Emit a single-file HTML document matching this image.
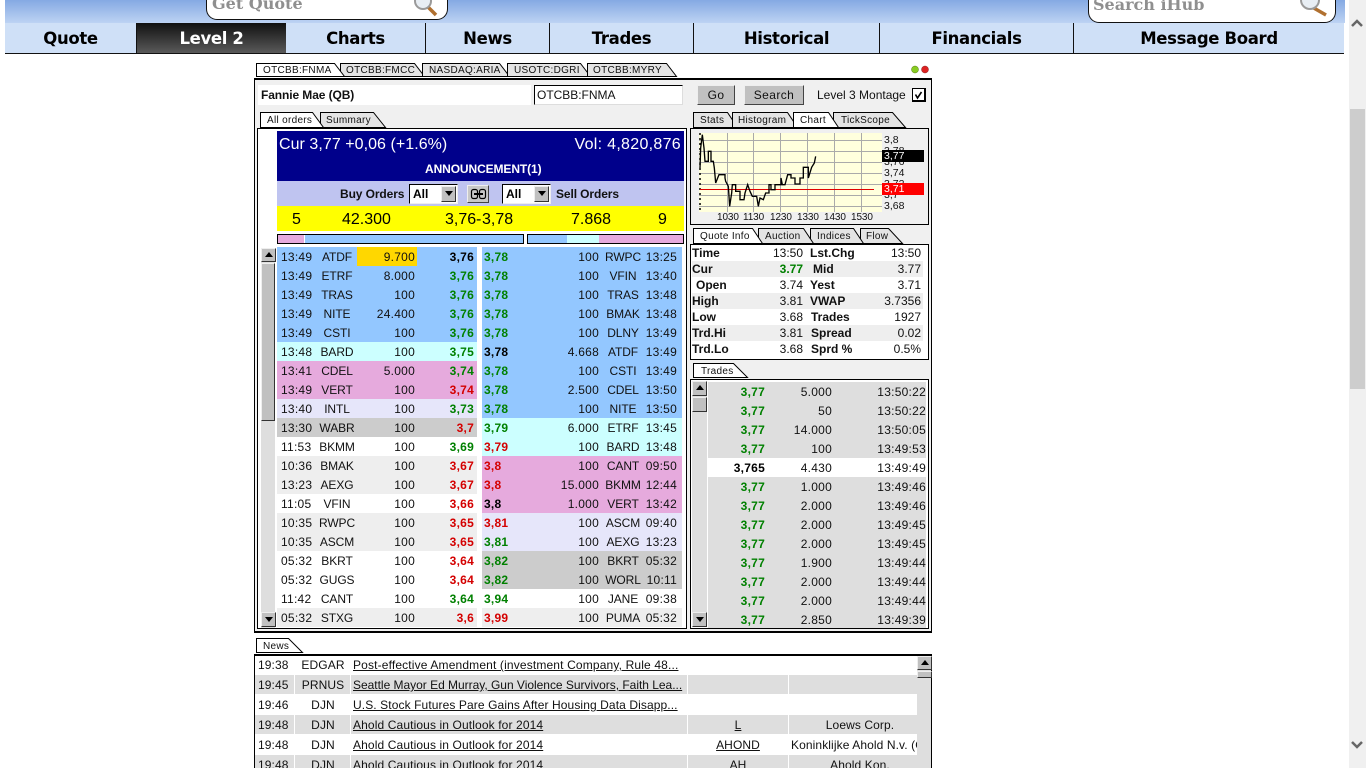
<!DOCTYPE html>
<html><head><meta charset="utf-8"><title>Level 2</title>
<style>
*{box-sizing:border-box}
html,body{margin:0;padding:0;width:1366px;height:768px;overflow:hidden;background:#fff;font-family:"Liberation Sans",sans-serif;font-size:12px;color:#111}
div,span,a{position:absolute;white-space:nowrap}
#root{left:0;top:0;width:1366px;height:768px;overflow:hidden;background:#fff}
#top{left:5px;top:0;width:1340px;height:23px;background:linear-gradient(#85a9e3,#bdd3f3)}
#nav{left:5px;top:23px;width:1339px;height:31px;background:#cfe0f7;border-bottom:1px solid #111}
#nav a{top:0;height:30px;text-align:center;font:bold 16.500px/31px "DejaVu Sans",sans-serif;color:#000;border-right:1px solid #111;letter-spacing:-.35px}
#nav a.on{background:linear-gradient(#111,#5a5a5a);color:#fff;border:0}
.sb{background:#fff;border:1.500px solid #111;border-top:0;border-radius:0 0 11px 11px;overflow:hidden}
.sb span{font:bold 16px "DejaVu Serif","DejaVu Sans",sans-serif;color:#8f8f8f}
#vs{left:1349px;top:0;width:17px;height:768px;background:#f0f0f0}
#vs div{left:1px;top:109px;width:15px;height:280px;background:#cdcdcd}
#app{left:254px;top:78px;width:678px;height:555px;background:#f0f0f0;border:1px solid #000;border-width:2px 1px 2px 1px}
.wb{background:#fff;border:1px solid #000}
.btn{background:#c0c0c0;border:1px solid;border-color:#eee #444 #444 #eee;text-align:center;letter-spacing:.4px;line-height:18px}
.r{height:19px;line-height:19px;left:277px;width:200px;letter-spacing:.25px}
.q{left:482px}
.r span{top:1px}
.r span:nth-child(1){left:4px}
.r span:nth-child(2){left:25px;width:70px;text-align:center;letter-spacing:-.1px}
.r span:nth-child(3){right:62px;z-index:1}
.r span:nth-child(4){right:3px;font-weight:bold}
.q span:nth-child(1){left:2px;right:auto;font-weight:bold}
.q span:nth-child(2){left:auto;right:83px;width:auto;font-weight:normal;letter-spacing:.25px}
.q span:nth-child(3){left:111px;right:auto;width:60px;text-align:center;letter-spacing:-.1px}
.q span:nth-child(4){right:5px;font-weight:normal}
.b{background:#93c7ff}.c{background:#ccffff}.p{background:#e6aadd}.l{background:#e6e6fa}.g{background:#cccccc}.w{background:#fff}.e{background:#eeeeee}
.gr{color:#008000}.rd{color:#d40000}.bk{color:#000}
.up,.dn{width:15px;height:15px;background:#c0c0c0;border:1px solid;border-color:#eee #333 #333 #eee}
.up:after,.dn:after{content:"";position:absolute;left:3px;border-left:4px solid transparent;border-right:4px solid transparent}
.up:after{top:3px;border-bottom:5px solid #000}
.dn:after{top:4px;border-top:5px solid #000}
.tr{left:708px;width:218px;height:19px;line-height:19px;background:#dedede;letter-spacing:.25px}
.tr span{top:1px}
.tr span:nth-child(1){right:161px;font-weight:bold;color:#008000}
.tr span:nth-child(2){right:94px}
.tr span:nth-child(3){right:0}
.n{left:255px;height:19px;line-height:19px;width:662px;letter-spacing:.1px;overflow:hidden}
.n span{top:1px;height:19px}
.n span:nth-child(1){left:3px}
.n span:nth-child(2){left:40px;width:56px;text-align:center}
.n span:nth-child(3){left:98px;text-decoration:underline}
.n span:nth-child(4){left:433px;width:100px;text-align:center;text-decoration:underline}
.n span:nth-child(5){left:534px;width:142px;text-align:center}
.gy{background:#dedede}
.sep{background:#fff;width:1px}
svg{position:absolute;left:0;top:0}
.ql{font-weight:bold}
</style></head><body>
<div id="root">
<div id="top"></div>
<div class="sb" style="left:206px;top:-6px;width:242px;height:26px"><span style="left:5px;top:0">Get Quote</span></div>
<div class="sb" style="left:1088px;top:-4px;width:248px;height:27px"><span style="left:4px;top:-1px">Search iHub</span></div>
<div id="nav">
<a style="left:0;width:132px;border-right:1px solid #111">Quote</a>
<a class="on" style="left:132px;width:149px">Level 2</a>
<a style="left:281px;width:140px">Charts</a>
<a style="left:421px;width:124px">News</a>
<a style="left:545px;width:144px">Trades</a>
<a style="left:689px;width:186px">Historical</a>
<a style="left:875px;width:194px">Financials</a>
<a style="left:1069px;width:270px;border:0">Message Board</a>
</div>
<div id="vs"><div></div></div>

<div id="app"></div>

<!-- title row -->
<div style="left:258px;top:85px;width:273px;height:20px;background:#fff;font-weight:bold;line-height:20px"><span style="left:3px;top:0;letter-spacing:-.1px">Fannie Mae (QB)</span></div>
<div style="left:534px;top:85px;width:149px;height:20px;background:#fff;border:1px solid;border-color:#000 #ddd #ddd #000;line-height:18px"><span style="left:2px;top:0;letter-spacing:-.02px">OTCBB:FNMA</span></div>
<div class="btn" style="left:697px;top:85px;width:38px;height:20px">Go</div>
<div class="btn" style="left:744px;top:85px;width:60px;height:20px">Search</div>
<span style="left:817px;top:88px">Level 3 Montage</span>
<div style="left:912px;top:88px;width:14px;height:14px;background:#fff;border:1px solid #000;border-width:1px 2px 2px 1px"></div>

<!-- left box -->
<div class="wb" style="left:257px;top:128px;width:430px;height:501px"></div>
<div style="left:277px;top:131px;width:407px;height:50px;background:#00008b;color:#fff">
<span style="left:2px;top:5px;font-size:16px;letter-spacing:.05px">Cur 3,77 +0,06 (+1.6%)</span>
<span style="right:3px;top:5px;font-size:16px;letter-spacing:.3px">Vol: 4,820,876</span>
<span style="left:148px;top:31px;font-weight:bold;letter-spacing:-.1px">ANNOUNCEMENT(1)</span>
</div>
<div style="left:277px;top:181px;width:407px;height:25px;background:#bfc4f0;font-weight:bold">
<span style="left:63px;top:6px;letter-spacing:-.1px">Buy Orders</span>
<span style="left:279px;top:6px;letter-spacing:-.1px">Sell Orders</span>
<div style="left:132px;top:3px;width:49px;height:20px;background:#fff;border:1px solid;border-color:#000 #eee #eee #000"><span style="left:3px;top:2px;color:#000">All</span><div class="dn" style="left:31px;top:1px;width:15px;height:16px"></div></div>
<div style="left:190px;top:4px;width:22px;height:18px;background:#c8c8c8;border:1px solid;border-color:#eee #444 #444 #eee"></div>
<div style="left:225px;top:3px;width:49px;height:20px;background:#fff;border:1px solid;border-color:#000 #eee #eee #000"><span style="left:3px;top:2px;color:#000">All</span><div class="dn" style="left:31px;top:1px;width:15px;height:16px"></div></div>
</div>
<div style="left:277px;top:206px;width:407px;height:25px;background:#ff0;font-size:16px;color:#000">
<span style="left:15px;top:5px">5</span><span style="left:65px;top:5px">42.300</span><span style="left:168px;top:5px">3,76</span><span style="left:199px;top:5px">-</span><span style="left:205px;top:5px">3,78</span><span style="left:294px;top:5px">7.868</span><span style="left:381px;top:5px">9</span>
</div>
<div style="left:277px;top:234px;width:247px;height:10px;border:1px solid #000;background:#93c7ff"><div style="left:0;top:0;width:27px;height:8px;background:#e6aadd;border-right:1px solid #fff"></div></div>
<div style="left:527px;top:234px;width:157px;height:10px;border:1px solid #000;background:#e6aadd"><div style="left:0;top:0;width:39px;height:8px;background:#93c7ff"></div><div style="left:39px;top:0;width:32px;height:8px;background:#ccffff"></div></div>

<!-- left scrollbar -->
<div style="left:261px;top:248px;width:14px;height:380px;background:#dedede"></div>
<div class="up" style="left:261px;top:248px;height:14px"></div>
<div style="left:261px;top:263px;width:14px;height:158px;background:#c0c0c0;border:1px solid;border-color:#eee #333 #333 #eee"></div>
<div class="dn" style="left:261px;top:612px"></div>

<!-- bid rows -->
<div class="r b" style="top:247px"><span>13:49</span><span>ATDF</span><span>9.700</span><span class="bk">3,76</span><div style="left:80px;top:0;width:60px;height:19px;background:#ffd700"></div></div>
<div class="r b" style="top:266px"><span>13:49</span><span>ETRF</span><span>8.000</span><span class="gr">3,76</span></div>
<div class="r b" style="top:285px"><span>13:49</span><span>TRAS</span><span>100</span><span class="gr">3,76</span></div>
<div class="r b" style="top:304px"><span>13:49</span><span>NITE</span><span>24.400</span><span class="gr">3,76</span></div>
<div class="r b" style="top:323px"><span>13:49</span><span>CSTI</span><span>100</span><span class="gr">3,76</span></div>
<div class="r c" style="top:342px"><span>13:48</span><span>BARD</span><span>100</span><span class="gr">3,75</span></div>
<div class="r p" style="top:361px"><span>13:41</span><span>CDEL</span><span>5.000</span><span class="gr">3,74</span></div>
<div class="r p" style="top:380px"><span>13:49</span><span>VERT</span><span>100</span><span class="rd">3,74</span></div>
<div class="r l" style="top:399px"><span>13:40</span><span>INTL</span><span>100</span><span class="gr">3,73</span></div>
<div class="r g" style="top:418px"><span>13:30</span><span>WABR</span><span>100</span><span class="rd">3,7</span></div>
<div class="r w" style="top:437px"><span>11:53</span><span>BKMM</span><span>100</span><span class="gr">3,69</span></div>
<div class="r e" style="top:456px"><span>10:36</span><span>BMAK</span><span>100</span><span class="rd">3,67</span></div>
<div class="r e" style="top:475px"><span>13:23</span><span>AEXG</span><span>100</span><span class="rd">3,67</span></div>
<div class="r w" style="top:494px"><span>11:05</span><span>VFIN</span><span>100</span><span class="rd">3,66</span></div>
<div class="r e" style="top:513px"><span>10:35</span><span>RWPC</span><span>100</span><span class="rd">3,65</span></div>
<div class="r e" style="top:532px"><span>10:35</span><span>ASCM</span><span>100</span><span class="rd">3,65</span></div>
<div class="r w" style="top:551px"><span>05:32</span><span>BKRT</span><span>100</span><span class="rd">3,64</span></div>
<div class="r w" style="top:570px"><span>05:32</span><span>GUGS</span><span>100</span><span class="rd">3,64</span></div>
<div class="r w" style="top:589px"><span>11:42</span><span>CANT</span><span>100</span><span class="gr">3,64</span></div>
<div class="r e" style="top:608px"><span>05:32</span><span>STXG</span><span>100</span><span class="rd">3,6</span></div>

<!-- ask rows -->
<div class="r q b" style="top:247px"><span class="gr">3,78</span><span>100</span><span>RWPC</span><span>13:25</span></div>
<div class="r q b" style="top:266px"><span class="gr">3,78</span><span>100</span><span>VFIN</span><span>13:40</span></div>
<div class="r q b" style="top:285px"><span class="gr">3,78</span><span>100</span><span>TRAS</span><span>13:48</span></div>
<div class="r q b" style="top:304px"><span class="gr">3,78</span><span>100</span><span>BMAK</span><span>13:48</span></div>
<div class="r q b" style="top:323px"><span class="gr">3,78</span><span>100</span><span>DLNY</span><span>13:49</span></div>
<div class="r q b" style="top:342px"><span class="bk">3,78</span><span>4.668</span><span>ATDF</span><span>13:49</span></div>
<div class="r q b" style="top:361px"><span class="gr">3,78</span><span>100</span><span>CSTI</span><span>13:49</span></div>
<div class="r q b" style="top:380px"><span class="gr">3,78</span><span>2.500</span><span>CDEL</span><span>13:50</span></div>
<div class="r q b" style="top:399px"><span class="gr">3,78</span><span>100</span><span>NITE</span><span>13:50</span></div>
<div class="r q c" style="top:418px"><span class="gr">3,79</span><span>6.000</span><span>ETRF</span><span>13:45</span></div>
<div class="r q c" style="top:437px"><span class="rd">3,79</span><span>100</span><span>BARD</span><span>13:48</span></div>
<div class="r q p" style="top:456px"><span class="rd">3,8</span><span>100</span><span>CANT</span><span>09:50</span></div>
<div class="r q p" style="top:475px"><span class="rd">3,8</span><span>15.000</span><span>BKMM</span><span>12:44</span></div>
<div class="r q p" style="top:494px"><span class="bk">3,8</span><span>1.000</span><span>VERT</span><span>13:42</span></div>
<div class="r q l" style="top:513px"><span class="rd">3,81</span><span>100</span><span>ASCM</span><span>09:40</span></div>
<div class="r q l" style="top:532px"><span class="gr">3,81</span><span>100</span><span>AEXG</span><span>13:23</span></div>
<div class="r q g" style="top:551px"><span class="gr">3,82</span><span>100</span><span>BKRT</span><span>05:32</span></div>
<div class="r q g" style="top:570px"><span class="gr">3,82</span><span>100</span><span>WORL</span><span>10:11</span></div>
<div class="r q w" style="top:589px"><span class="gr">3,94</span><span>100</span><span>JANE</span><span>09:38</span></div>
<div class="r q e" style="top:608px"><span class="rd">3,99</span><span>100</span><span>PUMA</span><span>05:32</span></div>

<!-- chart box -->
<div style="left:690px;top:128px;width:239px;height:97px;background:#f0f0f0;border:1px solid #000"></div>
<div style="left:884px;top:133px;font-size:10.500px;line-height:11px;color:#111;width:40px;height:80px">
<span style="left:0;top:2px">3,8</span><span style="left:0;top:13px">3,78</span><span style="left:0;top:24px">3,76</span><span style="left:0;top:35px">3,74</span><span style="left:0;top:46px">3,72</span><span style="left:0;top:57px">3,7</span><span style="left:0;top:68px">3,68</span>
</div>
<div style="left:882px;top:150px;width:42px;height:12px;background:#000;color:#fff;font-size:10.500px;line-height:12px"><span style="left:2px;top:0">3,77</span></div>
<div style="left:882px;top:183px;width:42px;height:12px;background:#f00;color:#fff;font-size:10.500px;line-height:12px"><span style="left:2px;top:0">3,71</span></div>
<div style="left:0;top:212px;width:1px;height:12px;font-size:10px;line-height:12px;letter-spacing:-.1px">
<span style="left:717px;top:0">1030</span><span style="left:743px;top:0">1130</span><span style="left:770px;top:0">1230</span><span style="left:797px;top:0">1330</span><span style="left:824px;top:0">1430</span><span style="left:851px;top:0">1530</span>
</div>

<!-- quote box -->
<div class="wb" style="left:690px;top:244px;width:239px;height:116px"></div>
<div style="left:692px;top:261px;width:231px;height:16px;background:#eee"></div>
<div style="left:692px;top:293px;width:231px;height:16px;background:#eee"></div>
<div style="left:692px;top:325px;width:231px;height:16px;background:#eee"></div>
<span class="ql" style="left:692px;top:246px">Time</span><span style="right:563px;top:246px">13:50</span><span class="ql" style="left:810px;top:246px">Lst.Chg</span><span style="right:445px;top:246px">13:50</span>
<span class="ql" style="left:692px;top:262px">Cur</span><span style="right:563px;top:262px;font-weight:bold;color:#008000">3.77</span><span class="ql" style="left:813px;top:262px">Mid</span><span style="right:445px;top:262px">3.77</span>
<span class="ql" style="left:696px;top:278px">Open</span><span style="right:563px;top:278px">3.74</span><span class="ql" style="left:810px;top:278px">Yest</span><span style="right:445px;top:278px">3.71</span>
<span class="ql" style="left:692px;top:294px">High</span><span style="right:563px;top:294px">3.81</span><span class="ql" style="left:810px;top:294px">VWAP</span><span style="right:445px;top:294px">3.7356</span>
<span class="ql" style="left:692px;top:310px">Low</span><span style="right:563px;top:310px">3.68</span><span class="ql" style="left:811px;top:310px">Trades</span><span style="right:445px;top:310px">1927</span>
<span class="ql" style="left:692px;top:326px">Trd.Hi</span><span style="right:563px;top:326px">3.81</span><span class="ql" style="left:811px;top:326px">Spread</span><span style="right:445px;top:326px">0.02</span>
<span class="ql" style="left:692px;top:342px">Trd.Lo</span><span style="right:563px;top:342px">3.68</span><span class="ql" style="left:811px;top:342px">Sprd %</span><span style="right:445px;top:342px">0.5%</span>

<!-- trades box -->
<div class="wb" style="left:690px;top:379px;width:239px;height:250px;overflow:hidden"></div>
<div style="left:692px;top:382px;width:15px;height:245px;background:#dedede"></div>
<div class="up" style="left:692px;top:381px"></div>
<div style="left:692px;top:397px;width:15px;height:15px;background:#c0c0c0;border:1px solid;border-color:#eee #333 #333 #eee"></div>
<div class="dn" style="left:692px;top:612px"></div>
<div class="tr" style="top:382px"><span>3,77</span><span>5.000</span><span>13:50:22</span></div>
<div class="tr" style="top:401px"><span>3,77</span><span>50</span><span>13:50:22</span></div>
<div class="tr" style="top:420px"><span>3,77</span><span>14.000</span><span>13:50:05</span></div>
<div class="tr" style="top:439px"><span>3,77</span><span>100</span><span>13:49:53</span></div>
<div class="tr" style="top:458px;background:#fff"><span style="color:#000">3,765</span><span>4.430</span><span>13:49:49</span></div>
<div class="tr" style="top:477px"><span>3,77</span><span>1.000</span><span>13:49:46</span></div>
<div class="tr" style="top:496px"><span>3,77</span><span>2.000</span><span>13:49:46</span></div>
<div class="tr" style="top:515px"><span>3,77</span><span>2.000</span><span>13:49:45</span></div>
<div class="tr" style="top:534px"><span>3,77</span><span>2.000</span><span>13:49:45</span></div>
<div class="tr" style="top:553px"><span>3,77</span><span>1.900</span><span>13:49:44</span></div>
<div class="tr" style="top:572px"><span>3,77</span><span>2.000</span><span>13:49:44</span></div>
<div class="tr" style="top:591px"><span>3,77</span><span>2.000</span><span>13:49:44</span></div>
<div class="tr" style="top:610px;height:18px"><span>3,77</span><span>2.850</span><span>13:49:39</span></div>

<!-- news -->
<div style="left:254px;top:654px;width:678px;height:114px;background:#fff;border:1px solid #000;border-width:2px 1px 0 1px"></div>
<div class="n" style="top:655px"><span>19:38</span><span>EDGAR</span><span style="letter-spacing:.15px">Post-effective Amendment (investment Company, Rule 48...</span></div>
<div class="n gy" style="top:675px"><span>19:45</span><span>PRNUS</span><span style="letter-spacing:-.02px">Seattle Mayor Ed Murray, Gun Violence Survivors, Faith Lea...</span></div>
<div class="n" style="top:695px"><span>19:46</span><span>DJN</span><span>U.S. Stock Futures Pare Gains After Housing Data Disapp...</span></div>
<div class="n gy" style="top:715px"><span>19:48</span><span>DJN</span><span style="letter-spacing:.12px">Ahold Cautious in Outlook for 2014</span><span>L</span><span>Loews Corp.</span></div>
<div class="n" style="top:735px"><span>19:48</span><span>DJN</span><span style="letter-spacing:.12px">Ahold Cautious in Outlook for 2014</span><span>AHOND</span><span style="left:536px;width:auto;text-align:left">Koninklijke Ahold N.v. (Or</span></div>
<div class="n gy" style="top:755px"><span>19:48</span><span>DJN</span><span style="letter-spacing:.12px">Ahold Cautious in Outlook for 2014</span><span>AH</span><span>Ahold Kon.</span></div>
<div class="sep" style="left:294px;top:675px;height:93px"></div>
<div class="sep" style="left:350px;top:675px;height:93px"></div>
<div class="sep" style="left:687px;top:675px;height:20px"></div>
<div class="sep" style="left:687px;top:715px;height:53px"></div>
<div class="sep" style="left:788px;top:675px;height:20px"></div>
<div class="sep" style="left:788px;top:715px;height:53px"></div>
<div style="left:917px;top:656px;width:14px;height:112px;background:#dedede"></div>
<div class="up" style="left:917px;top:656px;width:15px;height:14px"></div>
<div style="left:917px;top:671px;width:15px;height:7px;background:#c0c0c0;border:1px solid;border-color:#eee #333 #333 #eee"></div>

<svg width="1366" height="768" viewBox="0 0 1366 768">
<!-- magnifiers -->
<g fill="none">
<line x1="426" y1="5" x2="436" y2="15" stroke="#b07030" stroke-width="3.500"/>
<circle cx="423" cy="1" r="8" fill="#e8eef4" stroke="#9a9a9a" stroke-width="2"/>
<line x1="1312" y1="7" x2="1326" y2="15" stroke="#b07030" stroke-width="3.500"/>
<circle cx="1310" cy="0" r="9" fill="#e8eef4" stroke="#9a9a9a" stroke-width="2"/>
</g>
<!-- leds -->
<circle cx="915" cy="69.500" r="3.500" fill="#88cc22" stroke="#557711" stroke-width=".5"/>
<circle cx="925" cy="69.500" r="3.500" fill="#dd2222" stroke="#882222" stroke-width=".5"/>
<!-- checkbox tick -->
<path d="M915.500 94.500l2 3.500 4-6" fill="none" stroke="#000" stroke-width="1.600"/>
<!-- tabs -->
<g stroke="#000" stroke-width="1" fill="#e4e4e4">
<path d="M340.500 76.500V63.500H414.500L424.500 76.500z"/>
<path d="M422.500 76.500V63.500H499.500L509.500 76.500z"/>
<path d="M507.500 76.500V63.500H580.500L590.500 76.500z"/>
<path d="M587.500 76.500V63.500H666.500L676.500 76.500z"/>
<path d="M256.500 76.500V63.500H334.500L344.500 76.500H256.500z" fill="#fff"/>
<path d="M320.500 127.500V112.500H373.500L385.500 127.500z"/>
<path d="M260.500 127.500V112.500H312.500L323.500 127.500z" fill="#fff"/>
<path d="M693.500 127.500V112.500H727.500L737.500 127.500z"/>
<path d="M732.500 127.500V112.500H787.500L797.500 127.500z"/>
<path d="M833.500 127.500V112.500H892.500L905.500 127.500z"/>
<path d="M793.500 127.500V112.500H828.500L838.500 127.500z" fill="#fff"/>
<path d="M860.500 243.500V228.500H888.500L902.500 243.500z"/>
<path d="M810.500 243.500V228.500H853.500L863.500 243.500z"/>
<path d="M758.500 243.500V228.500H803.500L813.500 243.500z"/>
<path d="M693.500 243.500V228.500H752.500L762.500 243.500z" fill="#fff"/>
<path d="M693.500 377.500V363.500H733.500L747.500 377.500z" fill="#fff"/>
<path d="M256.500 652.500V638.500H288.500L302.500 652.500z" fill="#fff"/>
</g>
<g font-family="Liberation Sans" font-size="10" fill="#111" letter-spacing=".3">
<text x="263" y="73">OTCBB:FNMA</text><text x="346" y="73">OTCBB:FMCC</text><text x="429" y="73">NASDAQ:ARIA</text><text x="514" y="73">USOTC:DGRI</text><text x="593" y="73">OTCBB:MYRY</text>
<text x="267" y="123">All orders</text><text x="326" y="123">Summary</text>
<text x="700" y="123">Stats</text><text x="738" y="123">Histogram</text><text x="800" y="123">Chart</text><text x="841" y="123">TickScope</text>
<text x="700" y="239">Quote Info</text><text x="765" y="239">Auction</text><text x="817" y="239">Indices</text><text x="866" y="239">Flow</text>
<text x="701" y="374">Trades</text><text x="263" y="649">News</text>
</g>
<!-- chart -->
<rect x="699" y="133" width="183" height="79" fill="#ffffdd"/>
<g stroke="#aaa" stroke-width="1">
<path d="M727.500 133V212M753.500 133V212M780.500 133V212M807.500 133V212M834.500 133V212M861.500 133V212"/>
<path d="M699 140.500H882M699 151.500H882M699 162.500H882M699 173.500H882M699 184.500H882M699 195.500H882M699 206.500H882"/>
</g>
<path d="M700 133V212" stroke="#000" stroke-width="1.500" stroke-dasharray="2 3"/>
<line x1="700" y1="189.500" x2="874" y2="189.500" stroke="#e00000" stroke-width="1"/>
<g transform="translate(695 128) scale(.3333)">
<path d="M15 120L17 60 22 20 27 60 30 100H40V70H48V100H55L58 120 62 165 68 150 72 140H90V150L92 160 100 175 104 235 110 195 112 170H122V190H135V215H137L147 215 150 195 158 170 165 190 172 205H185L190 235 195 210 205 215 212 195H222V170H228V185H240V170H258V150L262 170H270L278 140H288V150H300V168H315V150H325V118H340V150L350 118 358 105 362 85" fill="none" stroke="#000" stroke-width="4"/>
</g>
<!-- link glyph -->
<g fill="none" stroke="#000" stroke-width="1.200"><rect x="471.500" y="189.500" width="6" height="9" rx="2"/><rect x="479.500" y="189.500" width="6" height="9" rx="2"/><line x1="474" y1="194" x2="483" y2="194" stroke-width="2"/></g>
<!-- page scrollbar chevrons -->
<path d="M1352 26l5-5 5 5" fill="none" stroke="#666" stroke-width="2.500"/>
<path d="M1352 742l5 5 5-5" fill="none" stroke="#666" stroke-width="2.500"/>
</svg>
</div>
</body></html>
